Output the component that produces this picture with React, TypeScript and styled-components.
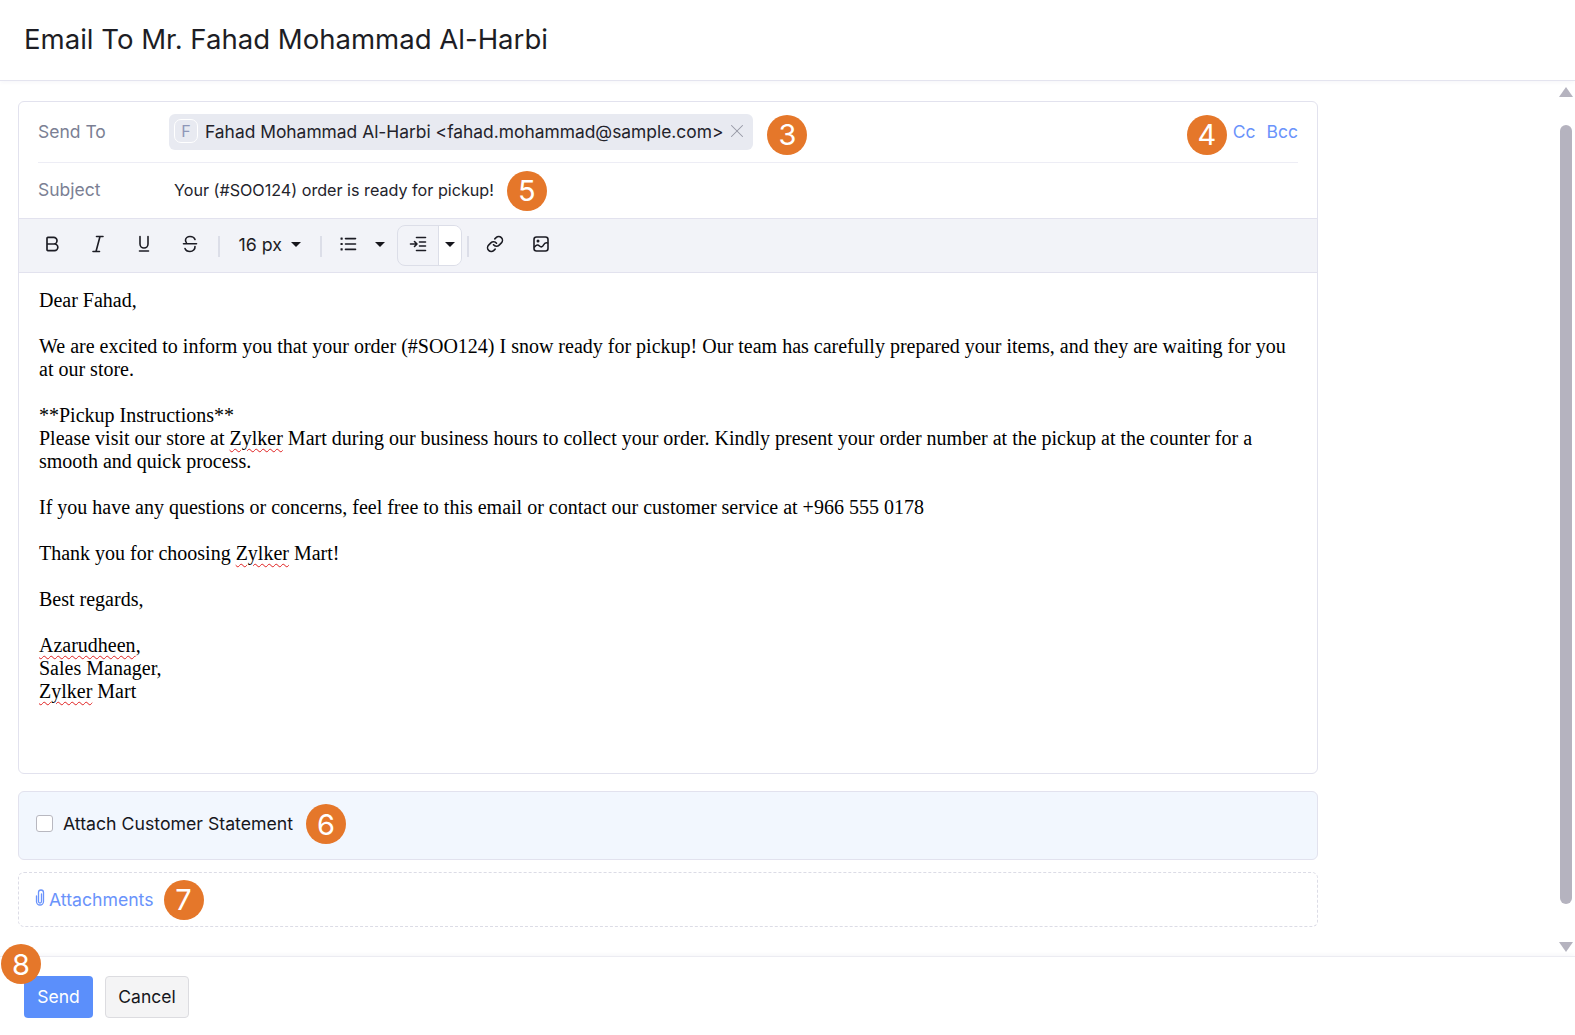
import React from 'react'
import styled, { createGlobalStyle } from 'styled-components';
import { Bold, Link, X } from 'lucide-react';

const GlobalStyle = createGlobalStyle`
  html, body {
    margin: 0;
    padding: 0;
    background: #fff;
    overflow: hidden;
  }
  body {
    font-family: Inter, "Liberation Sans", sans-serif;
    color: #1a1a1a;
  }
`;

const Page = styled.div`
  position: relative;
  width: 1575px;
  height: 1035px;
  display: flex;
  flex-direction: column;
`;

const Header = styled.header`
  height: 80px;
  flex-shrink: 0;
  padding-left: 24px;
  display: flex;
  align-items: center;
  border-bottom: 1px solid #e4e4ef;
  box-shadow: 0 2px 4px rgba(40, 40, 80, 0.03);
`;

const Title = styled.h1`
  margin: 0 0 2px;
  font-size: 27.55px;
  font-weight: 400;
  color: #1d1d24;
`;

const Middle = styled.div`
  height: 875px;
  flex-shrink: 0;
  display: flex;
  justify-content: space-between;
`;

const Content = styled.main`
  width: 1300px;
  margin: 20px 0 0 18px;
  display: flex;
  flex-direction: column;
  gap: 17px;
`;

const Card = styled.section`
  height: 673px;
  border: 1px solid #e2e2ee;
  border-radius: 6px;
  box-sizing: border-box;
  display: flex;
  flex-direction: column;
  overflow: hidden;
`;

const FieldRow = styled.div<{ $height: number; $border?: boolean }>`
  height: ${(p) => p.$height}px;
  flex-shrink: 0;
  margin: 0 19px;
  display: flex;
  align-items: center;
  border-bottom: ${(p) => (p.$border ? '1px solid #ededf5' : 'none')};
`;

const FieldLabel = styled.span`
  width: 131px;
  flex-shrink: 0;
  margin-bottom: 2px;
  font-size: 17.5px;
  color: #7b7f94;
`;

const Chip = styled.div`
  height: 36px;
  padding: 0 5px 2px 5px;
  border-radius: 6px;
  background: #e8eaf1;
  box-sizing: border-box;
  display: flex;
  align-items: center;
  font-size: 17.4px;
  color: #23232b;
`;

const ChipAvatar = styled.span`
  width: 24px;
  height: 24px;
  margin-right: 7px;
  border: 1px solid #fff;
  border-radius: 7px;
  box-sizing: border-box;
  display: flex;
  align-items: center;
  justify-content: center;
  font-size: 16px;
  color: #8f97b8;
`;

const ChipClose = styled(X)`
  margin-left: 3px;
  color: #9698a6;
`;

const SubjectText = styled.span`
  margin: 0 0 2px 5px;
  font-size: 16.15px;
  color: #23232b;
`;

const Badge = styled.span`
  width: 40px;
  height: 40px;
  flex-shrink: 0;
  border-radius: 50%;
  background: #e5772a;
  color: #fff;
  font-size: 29px;
  display: flex;
  align-items: center;
  justify-content: center;
`;

const ChipBadge = styled(Badge)`
  margin: 5px 0 0 14px;
`;

const SubjectBadge = styled(Badge)`
  margin-left: 13px;
`;

const CcBadge = styled(Badge)`
  margin: 5px 0 0 auto;
`;

const FloatingBadge = styled(Badge)`
  position: absolute;
  left: 1px;
  top: 944px;
`;

const CcLink = styled.a<{ $gap: number }>`
  margin-left: ${(p) => p.$gap}px;
  font-size: 17.5px;
  color: #6a93fb;
  position: relative;
  top: -1px;
`;

const Toolbar = styled.div`
  height: 55px;
  flex-shrink: 0;
  padding-left: 9.5px;
  display: flex;
  align-items: center;
  background: #f2f3f8;
  border-top: 1px solid #e2e2ee;
  border-bottom: 1px solid #e2e2ee;
  box-sizing: border-box;
  color: #1c1c24;
`;

const ToolButton = styled.span`
  width: 46px;
  height: 34px;
  margin-bottom: 3px;
  display: flex;
  align-items: center;
  justify-content: center;
`;

const ToolDivider = styled.span<{ $left: number; $right: number }>`
  width: 2px;
  height: 21px;
  background: #dcdee8;
  margin: 2px ${(p) => p.$right}px 0 ${(p) => p.$left}px;
`;

const FontSize = styled.span`
  font-size: 17.8px;
  margin: 0 9px 2px 0;
`;

const Caret = styled.span`
  width: 0;
  height: 0;
  margin-bottom: 2px;
  border-left: 5px solid transparent;
  border-right: 5px solid transparent;
  border-top: 5px solid #16161c;
`;

const ListCaret = styled(Caret)`
  margin-left: 4px;
`;

const SplitButton = styled.div`
  width: 65px;
  height: 41px;
  margin-left: 12px;
  display: flex;
  border: 1px solid #dcdee8;
  border-radius: 8px;
  box-sizing: border-box;
  overflow: hidden;
`;

const SplitMain = styled.span`
  width: 40px;
  padding-bottom: 3px;
  display: flex;
  align-items: center;
  justify-content: center;
  border-right: 1px solid #dcdee8;
`;

const SplitCaret = styled.span`
  flex: 1;
  background: #fff;
  display: flex;
  align-items: center;
  justify-content: center;
`;

const Body = styled.div`
  flex: 1;
  padding: 16px 20px;
  font-family: "Liberation Serif", "Times New Roman", serif;
  font-size: 20px;
  line-height: 23px;
  color: #000;
`;

const Line = styled.div`
  min-height: 23px;
`;

const Misspelt = styled.span`
  text-decoration: underline wavy #e02020 1px;
  text-underline-offset: 3px;
`;

const StatementBox = styled.div`
  height: 69px;
  padding: 0 0 3px 17px;
  display: flex;
  align-items: center;
  background: #f2f7fe;
  border: 1px solid #e2e2ee;
  border-radius: 6px;
  box-sizing: border-box;
`;

const CheckBox = styled.span`
  width: 17px;
  height: 17px;
  margin-bottom: 2px;
  background: #fff;
  border: 1px solid #b8b8c0;
  border-radius: 3px;
  box-sizing: border-box;
`;

const StatementLabel = styled.span`
  margin: 0 13px 2px 10px;
  font-size: 17.7px;
  color: #16161c;
`;

const AttachBox = styled.div`
  height: 55px;
  margin-top: -5px;
  padding-left: 16px;
  display: flex;
  align-items: center;
  border: 1px dashed #dcdce6;
  border-radius: 6px;
  box-sizing: border-box;
`;

const AttachLink = styled.a`
  display: flex;
  align-items: center;
  gap: 4px;
  margin-right: 10px;
  font-size: 17.65px;
  color: #6a93fb;
`;

const ScrollRail = styled.aside`
  width: 15px;
  margin-right: 2px;
  display: flex;
  flex-direction: column;
  align-items: center;
  padding-top: 6px;
`;

const ScrollThumb = styled.div`
  width: 12px;
  height: 779px;
  flex-shrink: 0;
  margin: 28px 0 38px;
  border-radius: 6px;
  background: #b5b3bf;
`;

const Arrow = styled.span<{ $up?: boolean }>`
  width: 0;
  height: 0;
  border-left: 7px solid transparent;
  border-right: 7px solid transparent;
  ${(p) => (p.$up ? 'border-bottom' : 'border-top')}: 10px solid #b5b3bf;
`;

const Footer = styled.footer`
  flex: 1;
  padding: 19px 0 0 24px;
  display: flex;
  align-items: flex-start;
  gap: 12px;
  background: #fff;
  border-top: 1px solid #ececf2;
  box-shadow: 0 -2px 4px rgba(40, 40, 80, 0.03);
`;

const SendButton = styled.button`
  width: 69px;
  height: 42px;
  padding-bottom: 3px;
  border: none;
  border-radius: 4px;
  background: #5b8ffb;
  color: #fff;
  font-family: inherit;
  font-size: 17.5px;
`;

const CancelButton = styled.button`
  width: 84px;
  height: 42px;
  padding-bottom: 3px;
  border: 1px solid #dcdce0;
  border-radius: 4px;
  background: #f4f4f5;
  color: #16161c;
  font-family: inherit;
  font-size: 17.5px;
`;

const Glyph = styled.svg`
  fill: none;
  stroke: currentColor;
  stroke-width: 1.6;
  stroke-linecap: round;
  stroke-linejoin: round;
`;

const ClipGlyph = styled(Glyph)`
  margin-bottom: 3px;
  stroke-width: 1.3;
`;

const SquareDot = styled.rect`
  fill: currentColor;
  stroke: none;
`;

function ItalicIcon() {
  return (
    <Glyph width="18" height="18" viewBox="0 0 18 18">
      <path d="M7.500 1.500h6.500M4 16.500h6.500M11 1.500 7 16.500" />
    </Glyph>
  );
}

function UnderlineIcon() {
  return (
    <Glyph width="18" height="18" viewBox="0 0 18 18">
      <path d="M5 1.500v7.500a4 4 0 0 0 8 0V1.500M4.500 16h9" />
    </Glyph>
  );
}

function StrikeIcon() {
  return (
    <Glyph width="18" height="18" viewBox="0 0 18 18">
      <path d="M14 4.500C13.300 2.500 11.500 1.500 9 1.500 6.500 1.500 4.500 3 4.500 5.200c0 .9.300 1.700.9 2.300" />
      <path d="M2.500 8.800h13" />
      <path d="M14 11.500c.2 2.800-2 5-5 5-2.500 0-4.300-1-5-3" />
    </Glyph>
  );
}

function ListIcon() {
  return (
    <Glyph width="18" height="18" viewBox="0 0 18 18">
      <SquareDot x="1.500" y="2.500" width="2.200" height="2.200" rx="0.4" />
      <SquareDot x="1.500" y="7.900" width="2.200" height="2.200" rx="0.4" />
      <SquareDot x="1.500" y="13.300" width="2.200" height="2.200" rx="0.4" />
      <path d="M6.500 3.600h10M6.500 9h10M6.500 14.400h10" />
    </Glyph>
  );
}

function IndentIcon() {
  return (
    <Glyph width="18" height="18" viewBox="0 0 18 18">
      <path d="M7.500 2.500h9M10.500 7h6M10.500 11h6M7.500 15.500h9" />
      <path d="M1.500 9h6.500M5.500 6.500 8 9l-2.500 2.500" />
    </Glyph>
  );
}

function ImageIcon() {
  return (
    <Glyph width="18" height="18" viewBox="0 0 18 18">
      <rect x="2" y="2" width="14" height="14" rx="2.500" />
      <path d="M2.500 12c2-2.500 3.500-2.500 5-1s3 1 4-1 2.500-2.500 4-2" />
      <circle cx="6" cy="6" r="0.7" />
    </Glyph>
  );
}

function ClipIcon() {
  return (
    <ClipGlyph width="10" height="18" viewBox="0 0 10 18">
      <path d="M6.500 5v7.500a1.500 1.500 0 0 1-3 0V3.500a2.500 2.500 0 0 1 5 0v9a3.500 3.500 0 0 1-7 0V7" />
    </ClipGlyph>
  );
}

function App() {
  return (
    <Page>
      <GlobalStyle />
      <Header>
        <Title>Email To Mr. Fahad Mohammad Al-Harbi</Title>
      </Header>
      <Middle>
        <Content>
          <Card>
            <FieldRow $height={60} $border>
              <FieldLabel>Send To</FieldLabel>
              <Chip>
                <ChipAvatar>F</ChipAvatar>
                Fahad Mohammad Al-Harbi &lt;fahad.mohammad@sample.com&gt;
                <ChipClose size={22} strokeWidth={1.1} />
              </Chip>
              <ChipBadge>3</ChipBadge>
              <CcBadge>4</CcBadge>
              <CcLink $gap={6}>Cc</CcLink>
              <CcLink $gap={11}>Bcc</CcLink>
            </FieldRow>
            <FieldRow $height={55}>
              <FieldLabel>Subject</FieldLabel>
              <SubjectText>Your (#SOO124) order is ready for pickup!</SubjectText>
              <SubjectBadge>5</SubjectBadge>
            </FieldRow>
            <Toolbar>
              <ToolButton><Bold size={20} strokeWidth={2} /></ToolButton>
              <ToolButton><ItalicIcon /></ToolButton>
              <ToolButton><UnderlineIcon /></ToolButton>
              <ToolButton><StrikeIcon /></ToolButton>
              <ToolDivider $left={5} $right={19} />
              <FontSize>16 px</FontSize>
              <Caret />
              <ToolDivider $left={19} $right={3} />
              <ToolButton><ListIcon /></ToolButton>
              <ListCaret />
              <SplitButton>
                <SplitMain><IndentIcon /></SplitMain>
                <SplitCaret><Caret /></SplitCaret>
              </SplitButton>
              <ToolDivider $left={5} $right={3} />
              <ToolButton><Link size={18} strokeWidth={2.1} /></ToolButton>
              <ToolButton><ImageIcon /></ToolButton>
            </Toolbar>
            <Body>
              <Line>Dear Fahad,</Line>
              <Line />
              <Line>We are excited to inform you that your order (#SOO124) I snow ready for pickup! Our team has carefully prepared your items, and they are waiting for you at our store.</Line>
              <Line />
              <Line>**Pickup Instructions**</Line>
              <Line>Please visit our store at <Misspelt>Zylker</Misspelt> Mart during our business hours to collect your order. Kindly present your order number at the pickup at the counter for a smooth and quick process.</Line>
              <Line />
              <Line>If you have any questions or concerns, feel free to this email or contact our customer service at +966 555 0178</Line>
              <Line />
              <Line>Thank you for choosing <Misspelt>Zylker</Misspelt> Mart!</Line>
              <Line />
              <Line>Best regards,</Line>
              <Line />
              <Line><Misspelt>Azarudheen</Misspelt>,</Line>
              <Line>Sales Manager,</Line>
              <Line><Misspelt>Zylker</Misspelt> Mart</Line>
            </Body>
          </Card>
          <StatementBox>
            <CheckBox />
            <StatementLabel>Attach Customer Statement</StatementLabel>
            <Badge>6</Badge>
          </StatementBox>
          <AttachBox>
            <AttachLink><ClipIcon />Attachments</AttachLink>
            <Badge>7</Badge>
          </AttachBox>
        </Content>
        <ScrollRail>
          <Arrow $up />
          <ScrollThumb />
          <Arrow />
        </ScrollRail>
      </Middle>
      <Footer>
        <SendButton>Send</SendButton>
        <CancelButton>Cancel</CancelButton>
      </Footer>
      <FloatingBadge>8</FloatingBadge>
    </Page>
  )
}

export default App
